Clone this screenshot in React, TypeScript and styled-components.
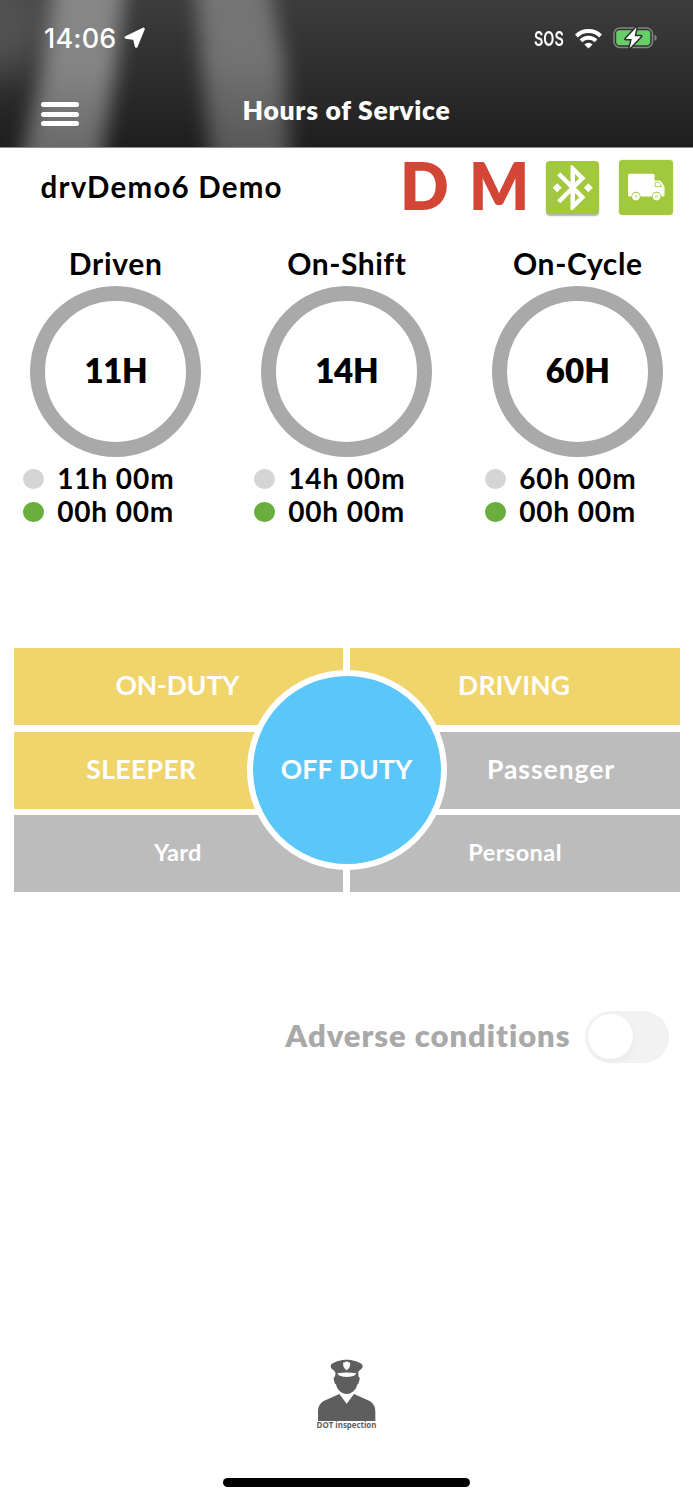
import React from "react";
import styled, { createGlobalStyle } from "styled-components";
import { MdBluetoothConnected } from "react-icons/md";

const GlobalStyle = createGlobalStyle`
  *, *::before, *::after { box-sizing: border-box; }
  body { margin: 0; background: #fff; }
`;

const Screen = styled.div`
  width: 693px;
  height: 1500px;
  display: flex;
  flex-direction: column;
  background: #fff;
  color: #000;
  font-family: "Lato", "Open Sans", sans-serif;
  overflow: hidden;
`;

/* ---------- header ---------- */

const Header = styled.header`
  position: relative;
  height: 148px;
  flex: none;
  border-bottom: 1px solid #8c8c8c;
  color: #fff;
  overflow: hidden;
`;

const Backdrop = styled.svg`
  position: absolute;
  inset: 0;
  width: 693px;
  height: 147px;
`;

const StatusBar = styled.div`
  position: relative;
  height: 76px;
  display: flex;
  align-items: center;
  justify-content: space-between;
  padding: 0 35px 0 44px;
`;

const StatusGroup = styled.div`
  display: flex;
  align-items: center;
`;

const Clock = styled.span`
  font: 500 27px/32px "Inter", sans-serif;
  letter-spacing: 0.2px;
  margin-right: 7px;
  padding-top: 2px;
`;

const Sos = styled.span`
  width: 30px;
  margin-right: 11px;
  font: 600 20px/24px "Inter", sans-serif;
  transform: scaleX(0.72);
  transform-origin: left;
  padding-top: 2px;
`;

const NavBar = styled.div`
  position: relative;
  height: 71px;
  display: grid;
  grid-template-columns: 120px 1fr 120px;
  align-items: center;
`;

const MenuButton = styled.button`
  display: flex;
  flex-direction: column;
  gap: 4.4px;
  width: 37.5px;
  margin: 5px 0 0 41px;
  padding: 0;
  border: 0;
  background: none;
`;

const MenuLine = styled.span`
  height: 5px;
  border-radius: 2.5px;
  background: #fff;
`;

const Title = styled.h1`
  margin: 0;
  padding-bottom: 3px;
  text-align: center;
  font-size: 26.5px;
  font-weight: 800;
  line-height: 32px;
  letter-spacing: 0.72px;
`;

/* ---------- driver row ---------- */

const DriverRow = styled.section`
  height: 78px;
  flex: none;
  display: flex;
  align-items: center;
  padding: 1px 20px 0 40.5px;
`;

const DriverName = styled.span`
  flex: 1;
  font-size: 29.5px;
  font-weight: 700;
  line-height: 36px;
  letter-spacing: 1.2px;
  padding-bottom: 2px;
`;

const Flag = styled.span<{ $width: number; $squeeze: number }>`
  width: ${(p) => p.$width}px;
  font-size: 66px;
  font-weight: 800;
  line-height: 78px;
  margin-top: -6px;
  color: #d34635;
  transform: scaleX(${(p) => p.$squeeze});
  transform-origin: left;
`;

const Tile = styled.span<{ $size: number; $raised?: boolean }>`
  width: ${(p) => p.$size}px;
  height: ${(p) => p.$size}px;
  border-radius: 4px;
  background: #a2c83e;
  color: #fff;
  box-shadow: ${(p) => (p.$raised ? "0 1.5px 1.5px rgba(0,0,0,.3)" : "0 0 1.5px rgba(162,200,62,.8)")};
  margin-left: ${(p) => (p.$raised ? 0 : 19.5)}px;
  svg { display: block; }
`;

/* ---------- gauges ---------- */

const Gauges = styled.section`
  display: grid;
  grid-template-columns: repeat(3, 231px);
  margin-top: 13.5px;
  padding-left: 0.3px;
`;

const Gauge = styled.div`
  display: flex;
  flex-direction: column;
  align-items: center;
`;

const GaugeLabel = styled.span<{ $ls: number }>`
  height: 46px;
  font-size: 30px;
  font-weight: 700;
  line-height: 46px;
  letter-spacing: ${(p) => p.$ls}px;
`;

const Ring = styled.div<{ $ls: number }>`
  width: 171px;
  height: 171px;
  border: 15px solid #a9a9a9;
  border-radius: 50%;
  display: flex;
  align-items: center;
  justify-content: center;
  padding-bottom: 2px;
  font-size: 33px;
  font-weight: 800;
  letter-spacing: ${(p) => p.$ls}px;
`;

const Legend = styled.div`
  align-self: stretch;
  padding: 4.5px 0 0 23.2px;
`;

const LegendItem = styled.div<{ $ls: number }>`
  display: flex;
  align-items: center;
  height: 33.3px;
  gap: 13.2px;
  font-size: 28px;
  font-weight: 700;
  letter-spacing: ${(p) => p.$ls}px;
`;

const Dot = styled.span<{ $color: string }>`
  width: 20.5px;
  height: 20.5px;
  margin-top: 2.5px;
  border-radius: 50%;
  background: ${(p) => p.$color};
`;

/* ---------- duty selector ---------- */

const DutyGrid = styled.section`
  position: relative;
  display: grid;
  grid-template-columns: 1fr 1fr;
  grid-auto-rows: 77px;
  gap: 6.5px;
  width: 666px;
  margin: 120.9px 0 0 13.5px;
`;

const DutyButton = styled.button<{ $active?: boolean; $size?: number; $ls: number; $pad?: string }>`
  border: 0;
  margin: 0;
  padding: ${(p) => p.$pad ?? "0 0 3px"};
  background: ${(p) => (p.$active ? "#f0d46c" : "#bcbcbc")};
  color: #fff;
  font: 700 ${(p) => p.$size ?? 26.5}px/32px "Lato", sans-serif;
  letter-spacing: ${(p) => p.$ls}px;
`;

const CurrentDuty = styled.button`
  position: absolute;
  left: 50%;
  top: 50%;
  width: 200px;
  height: 200px;
  transform: translate(-50%, -50%);
  border: 6.3px solid #fff;
  border-radius: 50%;
  background: #5bc7f9;
  color: #fff;
  padding: 0 0 3px;
  font: 700 26.5px/32px "Lato", sans-serif;
  letter-spacing: 0.2px;
`;

/* ---------- adverse conditions ---------- */

const SwitchRow = styled.label`
  display: flex;
  align-items: center;
  justify-content: flex-end;
  margin-top: 118.5px;
  padding-right: 24px;
  height: 52px;
  gap: 14px;
`;

const SwitchText = styled.span`
  color: #a9a9a9;
  font-size: 31px;
  font-weight: 800;
  line-height: 36px;
  letter-spacing: 0.95px;
  margin-top: -3px;
`;

const Track = styled.span`
  width: 84.5px;
  height: 52px;
  padding: 3px;
  border-radius: 26px;
  background: #f2f2f2;
`;

const Knob = styled.span`
  display: block;
  width: 45.5px;
  height: 45.5px;
  border-radius: 50%;
  background: #fff;
  box-shadow: 2px 3px 8px rgba(0, 0, 0, 0.03);
`;

/* ---------- footer ---------- */

const Inspection = styled.button`
  display: flex;
  flex-direction: column;
  align-items: center;
  align-self: center;
  margin-top: auto;
  padding: 0;
  border: 0;
  background: none;
  color: #5e5e5e;
  svg { display: block; }
`;

const InspectionText = styled.span`
  font: 700 7.9px/9px "Open Sans", sans-serif;
  white-space: nowrap;
`;

const HomeIndicator = styled.div`
  flex: none;
  align-self: center;
  width: 247px;
  height: 8.5px;
  margin: 48.5px 0 13.5px;
  border-radius: 5px;
  background: #000;
`;

const LocationIcon = () => (
  <svg width="22" height="22" viewBox="0 0 22 22">
    <path d="M19.4 2 12.2 19.4 10.4 11.6 2 10.4Z" fill="#fff" stroke="#fff" strokeWidth="2.8" strokeLinejoin="round" />
  </svg>
);

const WifiIcon = () => (
  <svg width="27" height="21" viewBox="0 0 27 21" fill="none" stroke="#fff" strokeWidth="3.9">
    <path d="M1.4 8a17.3 17.3 0 0 1 24.2 0" />
    <path d="M6 12.8a10.8 10.8 0 0 1 15 0" />
    <path d="M13.5 20.6 9.4 16.5a5.8 5.8 0 0 1 8.2 0Z" fill="#fff" stroke="none" />
  </svg>
);

const BatterySvg = styled.svg`
  margin-left: 11px;
`;

const BatteryIcon = () => (
  <BatterySvg width="45" height="24" viewBox="0 0 45 24">
    <rect x="1" y="2" width="38.5" height="19.5" rx="5.8" fill="none" stroke="#858585" strokeWidth="1.5" />
    <path d="M41.5 8.6q2.3 1 2.3 3.2t-2.3 3.2Z" fill="#858585" />
    <rect x="3.2" y="4.2" width="34" height="15" rx="3.4" fill="#68ce67" />
    <path d="M23.5 1.2 12.6 13h6.2l-2.2 9.3L28 10.2h-6.4Z" fill="#fff" stroke="#2c2c2c" strokeWidth="3" paintOrder="stroke" strokeLinejoin="round" />
  </BatterySvg>
);

const TruckIcon = () => (
  <svg width="54.5" height="54.5" viewBox="0 0 164 164">
    <path fill="#fff" d="M32 41h70q5 0 5 5v16h14q4 0 6 3l8 12q2 3 2 6v22q0 5-5 5H32q-5 0-5-5V46q0-5 5-5Z" />
    <path fill="none" stroke="#a2c83e" strokeWidth="2.5" strokeLinejoin="round" d="M109 67h10q2 0 3 2l7 11h-20Z" />
    <circle cx="51" cy="109" r="13.5" fill="#a2c83e" />
    <circle cx="51" cy="110" r="8.5" fill="#dcebb8" stroke="#fff" strokeWidth="6" />
    <circle cx="113" cy="109" r="13.5" fill="#a2c83e" />
    <circle cx="113" cy="110" r="8.5" fill="#dcebb8" stroke="#fff" strokeWidth="6" />
  </svg>
);

const OfficerIcon = () => (
  <svg width="60" height="62" viewBox="50 25 180 186" fill="#5e5e5e">
    <path d="M53 211v-28c0-18 8-28 22-34l42-19 22 29 22-29 42 19c14 6 22 16 22 34v28Z" />
    <path d="M106 64h68v14c5 0 5 8 1 18-1 4-2 5-4 5-3 17-17 29-32 29s-29-12-32-29c-2 0-3-1-4-5-4-10-4-18 1-18Z" />
    <path d="M139 27c-17 0-34 5-44 12-6 4-4 12 0 16 4 3 9 6 11 12h66c2-6 7-9 11-12 4-4 6-12 0-16-10-7-27-12-44-12Z" />
    <path fill="#fff" d="M111 68q28-5 57 0c-2 7-14 11-29 11s-26-4-28-11Z" />
    <path fill="#fff" d="M129 35q6 1 10-3 4 4 10 3 3 16-10 24-13-8-10-24Z" />
  </svg>
);

const gauges = [
  { label: "Driven", labelLs: 0.7, limit: "11H", limitLs: -0.4, left: "11h 00m", used: "00h 00m" },
  { label: "On-Shift", labelLs: 0.55, limit: "14H", limitLs: -0.2, left: "14h 00m", used: "00h 00m" },
  { label: "On-Cycle", labelLs: 0.6, limit: "60H", limitLs: 0.1, left: "60h 00m", used: "00h 00m" },
];

export default function App() {
  return (
    <>
      <GlobalStyle />
      <Screen>
        <Header>
          <Backdrop viewBox="0 0 693 147" preserveAspectRatio="none">
            <defs>
              <linearGradient id="base" x1="0" y1="0" x2="0" y2="1">
                <stop offset="0" stopColor="#3c3c3c" />
                <stop offset="0.5" stopColor="#2e2e2e" />
                <stop offset="1" stopColor="#1e1e1e" />
              </linearGradient>
              <linearGradient id="beam" gradientUnits="userSpaceOnUse" x1="0" y1="0" x2="0" y2="147">
                <stop offset="0" stopColor="#868686" />
                <stop offset="0.45" stopColor="#858585" />
                <stop offset="1" stopColor="#6a6a6a" />
              </linearGradient>
              <linearGradient id="beamDim" gradientUnits="userSpaceOnUse" x1="0" y1="0" x2="0" y2="147">
                <stop offset="0" stopColor="#757575" />
                <stop offset="0.4" stopColor="#737373" />
                <stop offset="1" stopColor="#585858" />
              </linearGradient>
              <filter id="soft" x="-50%" y="-50%" width="200%" height="200%" colorInterpolationFilters="sRGB">
                <feGaussianBlur stdDeviation="10 6" />
              </filter>
              <filter id="softer" x="-100%" y="-100%" width="300%" height="300%" colorInterpolationFilters="sRGB">
                <feGaussianBlur stdDeviation="20" />
              </filter>
            </defs>
            <rect width="693" height="147" fill="url(#base)" />
            <ellipse cx="0" cy="20" rx="50" ry="55" fill="#525252" filter="url(#softer)" />
            <path d="M56-40H128L116 70 96 190H14L42 70Z" fill="url(#beam)" filter="url(#soft)" />
            <path d="M194-40H264L284 60 292 190H214L202 70Z" fill="url(#beamDim)" filter="url(#soft)" />
          </Backdrop>
          <StatusBar>
            <StatusGroup>
              <Clock>14:06</Clock>
              <LocationIcon />
            </StatusGroup>
            <StatusGroup>
              <Sos>SOS</Sos>
              <WifiIcon />
              <BatteryIcon />
            </StatusGroup>
          </StatusBar>
          <NavBar>
            <MenuButton aria-label="Menu">
              <MenuLine />
              <MenuLine />
              <MenuLine />
            </MenuButton>
            <Title>Hours of Service</Title>
          </NavBar>
        </Header>

        <DriverRow>
          <DriverName>drvDemo6 Demo</DriverName>
          <Flag $width={69} $squeeze={0.97}>D</Flag>
          <Flag $width={77} $squeeze={0.95}>M</Flag>
          <Tile $size={53.5} $raised>
            <MdBluetoothConnected size={53.5} />
          </Tile>
          <Tile $size={54.5}>
            <TruckIcon />
          </Tile>
        </DriverRow>

        <Gauges>
          {gauges.map((g) => (
            <Gauge key={g.label}>
              <GaugeLabel $ls={g.labelLs}>{g.label}</GaugeLabel>
              <Ring $ls={g.limitLs}>{g.limit}</Ring>
              <Legend>
                <LegendItem $ls={0.9}>
                  <Dot $color="#d5d5d5" />
                  {g.left}
                </LegendItem>
                <LegendItem $ls={0.85}>
                  <Dot $color="#6aaf3d" />
                  {g.used}
                </LegendItem>
              </Legend>
            </Gauge>
          ))}
        </Gauges>

        <DutyGrid>
          <DutyButton $active $ls={-0.1} $pad="0 2px 3px 0">ON-DUTY</DutyButton>
          <DutyButton $active $ls={0.15} $pad="0 1px 3px 0">DRIVING</DutyButton>
          <DutyButton $active $ls={0.4} $pad="0 74px 3px 0">SLEEPER</DutyButton>
          <DutyButton $ls={0.95} $pad="0 0 3px 73px">Passenger</DutyButton>
          <DutyButton $size={23.5} $ls={0.4} $pad="0 1px 3px 0">Yard</DutyButton>
          <DutyButton $size={23.5} $ls={0.45} $pad="0 0 3px 1px">Personal</DutyButton>
          <CurrentDuty>OFF DUTY</CurrentDuty>
        </DutyGrid>

        <SwitchRow>
          <SwitchText>Adverse conditions</SwitchText>
          <Track>
            <Knob />
          </Track>
        </SwitchRow>

        <Inspection>
          <OfficerIcon />
          <InspectionText>DOT inspection</InspectionText>
        </Inspection>
        <HomeIndicator />
      </Screen>
    </>
  );
}
